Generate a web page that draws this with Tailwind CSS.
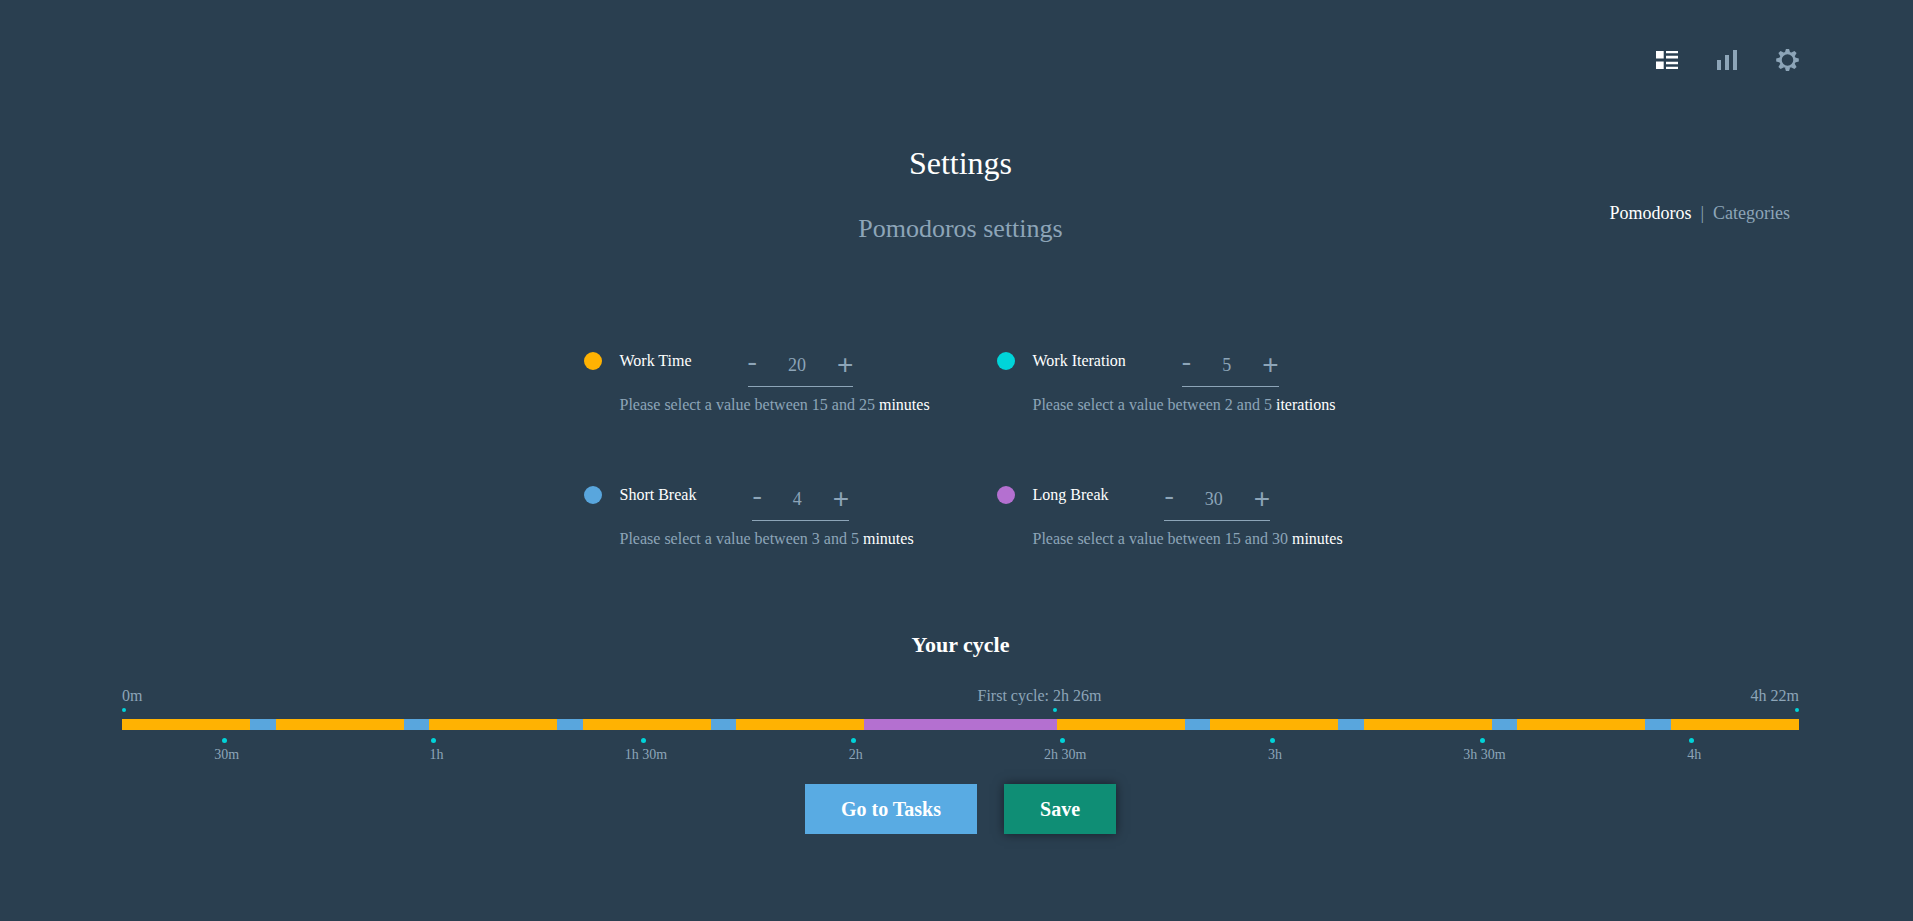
<!DOCTYPE html>
<html lang="en">
<head>
<meta charset="utf-8">
<meta name="viewport" content="width=device-width, initial-scale=1">
<title>Settings</title>
<script src="https://cdn.jsdelivr.net/npm/@tailwindcss/browser@4"></script>
</head>
<body class="min-h-screen bg-[#2a3f50] pl-[122px] pr-[114px] pt-[49px] pb-10 font-['Liberation_Serif','Times_New_Roman',serif] text-[16px] leading-5 text-[#8da5b8]">
<header>
  <nav class="flex h-[22px] items-center justify-end gap-[39px]" aria-label="Main">
    <a href="#tasks" aria-label="Tasks" class="text-white"><svg class="block" width="22" height="18" viewBox="0 0 22 18" fill="currentColor"><path d="M0 0h7.700v7.500H0zM0 10.500h7.700V18H0zM10 0h12v2.300H10zM10 4.800h12v2.600H10zM10 10.700h12v2.600H10zM10 15.800h12V18H10z"/></svg></a>
    <a href="#reports" aria-label="Reports"><svg class="block" width="20" height="20" viewBox="0 0 20 20" fill="currentColor"><path d="M0 10h4v10H0zM8 5h4v15H8zM16 0h4v20h-4z"/></svg></a>
    <a href="#settings" aria-label="Settings"><svg class="block" width="23" height="22" viewBox="-11.500 -11 23 22" fill="currentColor"><path id="tooth" d="M-2.600-7.500-1.500-11.300h3L2.600-7.500z"/><use href="#tooth" transform="rotate(45)"/><use href="#tooth" transform="rotate(90)"/><use href="#tooth" transform="rotate(135)"/><use href="#tooth" transform="rotate(180)"/><use href="#tooth" transform="rotate(225)"/><use href="#tooth" transform="rotate(270)"/><use href="#tooth" transform="rotate(315)"/><circle r="7" fill="none" stroke="currentColor" stroke-width="2.500"/></svg></a>
  </nav>
</header>
<main>
  <h1 class="mt-[72px] text-center text-[32px] leading-10 text-white">Settings</h1>
  <div class="mt-[18px] grid grid-cols-[1fr_auto_1fr] items-start">
    <h2 class="col-start-2 pt-3 text-[26px] leading-8">Pomodoros settings</h2>
    <nav class="flex justify-end gap-[9px] pr-[9px] text-[18px] leading-6" aria-label="Settings sections">
      <a href="#pomodoros" class="text-white">Pomodoros</a><span aria-hidden="true">|</span><a href="#categories">Categories</a>
    </nav>
  </div>

  <form id="cycle-form" class="mt-[102px] grid grid-cols-[341px_341px] justify-center gap-x-[72px] gap-y-[66px] whitespace-nowrap">
    <section class="flex items-start gap-[18px]">
      <span class="mt-[5px] size-[18px] shrink-0 rounded-full bg-[#ffb202]"></span>
      <div>
        <div class="flex items-start gap-14">
          <label for="work" class="pt-1 text-white">Work Time</label>
          <div class="flex items-start gap-[31px] border-b border-[#8da5b8] pb-[7px] text-[18px] leading-7">
            <button type="button" aria-label="Less work time" class="text-[28px] leading-7">-</button><output id="work" class="pt-1">20</output><button type="button" aria-label="More work time" class="pt-1 font-['Liberation_Sans',sans-serif] text-[28px] leading-7">+</button>
          </div>
        </div>
        <p class="mt-2">Please select a value between 15 and 25 <span class="text-white">minutes</span></p>
      </div>
    </section>
    <section class="flex items-start gap-[18px]">
      <span class="mt-[5px] size-[18px] shrink-0 rounded-full bg-[#00d4d9]"></span>
      <div>
        <div class="flex items-start gap-14">
          <label for="iterations" class="pt-1 text-white">Work Iteration</label>
          <div class="flex items-start gap-[31px] border-b border-[#8da5b8] pb-[7px] text-[18px] leading-7">
            <button type="button" aria-label="Fewer iterations" class="text-[28px] leading-7">-</button><output id="iterations" class="pt-1">5</output><button type="button" aria-label="More iterations" class="pt-1 font-['Liberation_Sans',sans-serif] text-[28px] leading-7">+</button>
          </div>
        </div>
        <p class="mt-2">Please select a value between 2 and 5 <span class="text-white">iterations</span></p>
      </div>
    </section>
    <section class="flex items-start gap-[18px]">
      <span class="mt-[5px] size-[18px] shrink-0 rounded-full bg-[#59a6dd]"></span>
      <div>
        <div class="flex items-start gap-14">
          <label for="short" class="pt-1 text-white">Short Break</label>
          <div class="flex items-start gap-[31px] border-b border-[#8da5b8] pb-[7px] text-[18px] leading-7">
            <button type="button" aria-label="Shorter short break" class="text-[28px] leading-7">-</button><output id="short" class="pt-1">4</output><button type="button" aria-label="Longer short break" class="pt-1 font-['Liberation_Sans',sans-serif] text-[28px] leading-7">+</button>
          </div>
        </div>
        <p class="mt-2">Please select a value between 3 and 5 <span class="text-white">minutes</span></p>
      </div>
    </section>
    <section class="flex items-start gap-[18px]">
      <span class="mt-[5px] size-[18px] shrink-0 rounded-full bg-[#b470d0]"></span>
      <div>
        <div class="flex items-start gap-14">
          <label for="long" class="pt-1 text-white">Long Break</label>
          <div class="flex items-start gap-[31px] border-b border-[#8da5b8] pb-[7px] text-[18px] leading-7">
            <button type="button" aria-label="Shorter long break" class="text-[28px] leading-7">-</button><output id="long" class="pt-1">30</output><button type="button" aria-label="Longer long break" class="pt-1 font-['Liberation_Sans',sans-serif] text-[28px] leading-7">+</button>
          </div>
        </div>
        <p class="mt-2">Please select a value between 15 and 30 <span class="text-white">minutes</span></p>
      </div>
    </section>
  </form>

  <h3 class="mt-[82px] text-center text-[22px] font-bold leading-7 text-white">Your cycle</h3>
  <!-- First cycle lasts 146 of 262 minutes -->
  <div class="mt-[27px] grid grid-cols-[146fr_116fr]">
    <div class="flex justify-between">
      <div>0m<span class="mt-0.5 block size-1 rounded-full bg-[#00d4d9]"></span></div>
      <div class="-mr-[45px] flex flex-col">First cycle: 2h 26m<span class="mr-[45px] mt-0.5 size-1 self-end rounded-full bg-[#00d4d9]"></span></div>
    </div>
    <div class="flex flex-col items-end">4h 22m<span class="mt-0.5 size-1 rounded-full bg-[#00d4d9]"></span></div>
  </div>
  <div class="mt-[7px] grid h-[11px] grid-cols-[20fr_4fr_20fr_4fr_20fr_4fr_20fr_4fr_20fr_30fr_20fr_4fr_20fr_4fr_20fr_4fr_20fr_4fr_20fr] bg-[#ffb202]">
    <span class="col-start-2 bg-[#59a6dd]"></span>
    <span class="col-start-4 bg-[#59a6dd]"></span>
    <span class="col-start-6 bg-[#59a6dd]"></span>
    <span class="col-start-8 bg-[#59a6dd]"></span>
    <span class="col-start-10 bg-[#b470d0]"></span>
    <span class="col-start-12 bg-[#59a6dd]"></span>
    <span class="col-start-14 bg-[#59a6dd]"></span>
    <span class="col-start-16 bg-[#59a6dd]"></span>
    <span class="col-start-18 bg-[#59a6dd]"></span>
  </div>
  <ul class="mt-2 grid grid-cols-8 text-[14px] leading-4">
    <li class="flex flex-col items-center gap-1"><span class="mr-[5px] size-[5px] rounded-full bg-[#00d4d9]"></span>30m</li>
    <li class="flex flex-col items-center gap-1"><span class="mr-[5px] size-[5px] rounded-full bg-[#00d4d9]"></span>1h</li>
    <li class="flex flex-col items-center gap-1"><span class="mr-[5px] size-[5px] rounded-full bg-[#00d4d9]"></span>1h 30m</li>
    <li class="flex flex-col items-center gap-1"><span class="mr-[5px] size-[5px] rounded-full bg-[#00d4d9]"></span>2h</li>
    <li class="flex flex-col items-center gap-1"><span class="mr-[5px] size-[5px] rounded-full bg-[#00d4d9]"></span>2h 30m</li>
    <li class="flex flex-col items-center gap-1"><span class="mr-[5px] size-[5px] rounded-full bg-[#00d4d9]"></span>3h</li>
    <li class="flex flex-col items-center gap-1"><span class="mr-[5px] size-[5px] rounded-full bg-[#00d4d9]"></span>3h 30m</li>
    <li class="flex flex-col items-center gap-1"><span class="mr-[5px] size-[5px] rounded-full bg-[#00d4d9]"></span>4h</li>
  </ul>
  <div class="mt-[21px] flex justify-center gap-[27px] text-[20px] font-bold leading-6 text-white">
    <button type="button" class="bg-[#59abe3] px-9 py-[13px]">Go to Tasks</button>
    <button type="submit" form="cycle-form" class="bg-[#0f8e75] px-9 py-[13px] shadow-[0_0_10px_rgba(0,0,0,0.5)]">Save</button>
  </div>
</main>
</body>
</html>
